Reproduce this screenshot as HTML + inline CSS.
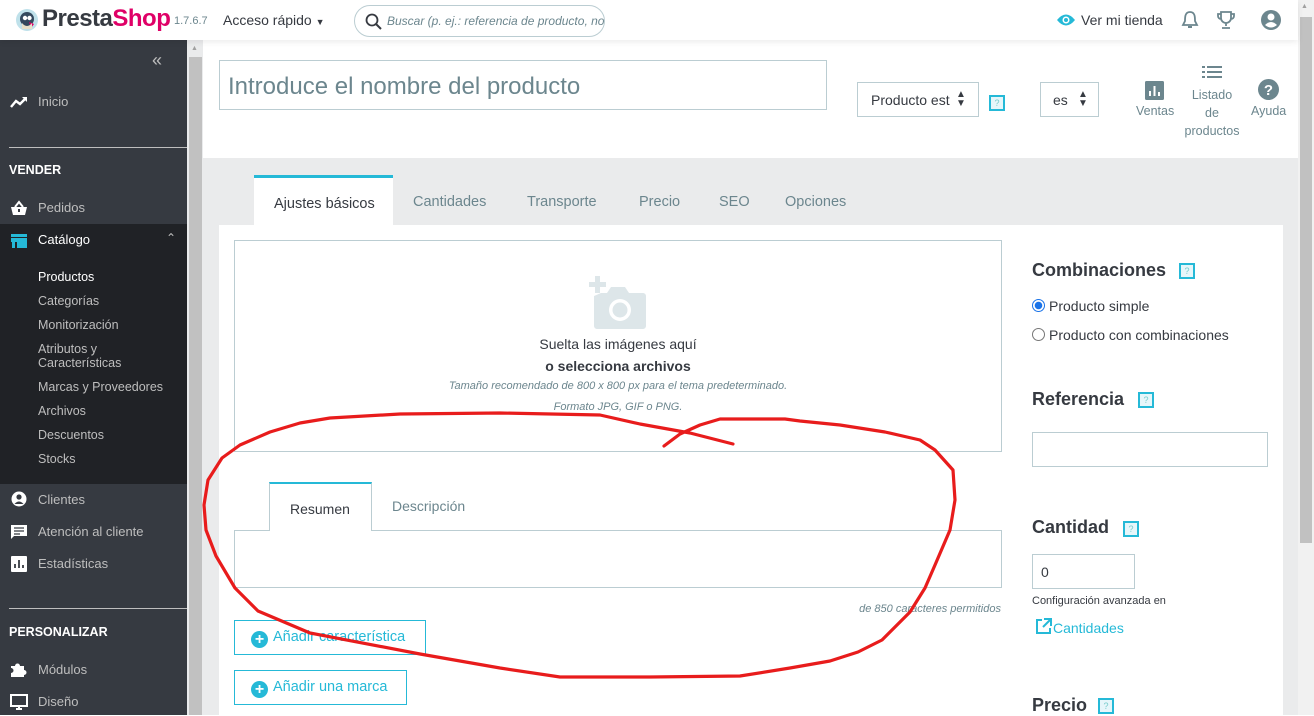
<!DOCTYPE html>
<html><head><meta charset="utf-8">
<style>
*{box-sizing:border-box;margin:0;padding:0}
body{width:1314px;height:715px;overflow:hidden;position:relative;font-family:"Liberation Sans","DejaVu Sans",sans-serif;background:#fff;color:#363a41}
.a{position:absolute;white-space:nowrap}
#hdr{position:absolute;left:0;top:0;width:1298px;height:40px;background:#fff;box-shadow:0 2px 6px rgba(0,0,0,.08);z-index:3}
#side{position:absolute;left:0;top:40px;width:187px;height:675px;background:#363a41}
.si{position:absolute;left:38px;font-size:13px;color:#bebebe}
.sub{position:absolute;left:38px;font-size:12.5px;color:#bebebe}
.ic{position:absolute;left:10px;width:18px;height:16px}
.q{position:absolute;width:16px;height:16px;border:2px solid #25b9d7;background:#e6f6fa;color:#7cc;font-size:9px;text-align:center;line-height:12px}
.tab{position:absolute;top:194px;font-size:14.5px;color:#6c868e}
.btn{position:absolute;left:234px;height:35px;border:1px solid #25b9d7;color:#25b9d7;font-size:14.5px;padding-left:16px;line-height:33px}
.btn span{display:inline-block;width:17px;height:17px;border-radius:50%;background:#25b9d7;color:#fff;font-size:16px;line-height:17px;text-align:center;font-weight:bold;vertical-align:-3px;margin-right:5px}
h3{position:absolute;left:1032px;font-size:18px;font-weight:bold;color:#363a41}
</style></head><body>
<div id="hdr">
 <svg class="a" style="left:15px;top:8px" width="24" height="24" viewBox="0 0 24 24"><circle cx="12" cy="12" r="11" fill="#bfe1ea"/><circle cx="12" cy="11" r="7" fill="#34495e"/><circle cx="10" cy="10" r="2.2" fill="#fff"/><circle cx="14.5" cy="10" r="2.2" fill="#fff"/><path d="M14 14 l5 2 -3 4z" fill="#df0067"/><path d="M7 15 q5 6 10 0 v6 h-10z" fill="#e8e0c8"/></svg>
 <div class="a" style="left:42px;top:5px;font-size:24px;font-weight:bold;letter-spacing:-0.5px"><span style="color:#363a41">Presta</span><span style="color:#df0067">Shop</span></div>
 <div class="a" style="left:174px;top:15px;font-size:11px;color:#6c868e">1.7.6.7</div>
 <div class="a" style="left:223px;top:12px;font-size:14px;color:#363a41">Acceso rápido <span style="font-size:9px">▼</span></div>
 <div class="a" style="left:354px;top:5px;width:251px;height:32px;border:1px solid #bbcdd2;border-radius:16px;overflow:hidden">
  <svg class="a" style="left:10px;top:7px" width="17" height="17" viewBox="0 0 17 17"><circle cx="7" cy="7" r="5.5" stroke="#363a41" stroke-width="1.8" fill="none"/><path d="M11 11l5 5" stroke="#363a41" stroke-width="2"/></svg>
  <div class="a" style="left:32px;top:8px;font-size:12px;font-style:italic;color:#6c868e">Buscar (p. ej.: referencia de producto, nom</div>
 </div>
 <svg class="a" style="left:1056px;top:12px" width="20" height="16" viewBox="0 0 20 16"><path d="M1 8 Q10 -3 19 8 Q10 19 1 8z" fill="#25b9d7"/><circle cx="10" cy="8" r="3.5" fill="#fff"/><circle cx="10" cy="8" r="2" fill="#25b9d7"/></svg>
 <div class="a" style="left:1081px;top:12px;font-size:14px;color:#363a41">Ver mi tienda</div>
 <svg class="a" style="left:1181px;top:10px" width="18" height="20" viewBox="0 0 18 20"><path d="M9 2 C4 2 4 7 4 11 L2 15 H16 L14 11 C14 7 14 2 9 2z" fill="none" stroke="#6c868e" stroke-width="1.8"/><path d="M7 17 h4" stroke="#6c868e" stroke-width="2"/></svg>
 <svg class="a" style="left:1216px;top:10px" width="20" height="20" viewBox="0 0 20 20"><path d="M5 2h10v6a5 5 0 0 1-10 0z M5 4H2v2a3 3 0 0 0 3 3 M15 4h3v2a3 3 0 0 1-3 3 M10 13v3 M6 18h8" fill="none" stroke="#6c868e" stroke-width="1.8"/></svg>
 <svg class="a" style="left:1260px;top:9px" width="22" height="22" viewBox="0 0 22 22"><circle cx="11" cy="11" r="10" fill="#6c868e"/><circle cx="11" cy="8" r="3.5" fill="#fff"/><path d="M5 16 q6-6 12 0 q-6 5 -12 0z" fill="#fff"/></svg>
</div>

<div id="side">
 <div class="a" style="left:152px;top:10px;font-size:18px;color:#bebebe">«</div>
 <svg class="ic" style="top:54px" viewBox="0 0 18 16"><path d="M1 13 L6 7 L10 10 L16 4" stroke="#fff" stroke-width="2.4" fill="none"/><path d="M12 3h5v5z" fill="#fff"/></svg>
 <div class="si" style="top:54px">Inicio</div>
 <div class="a" style="left:9px;top:107px;width:178px;height:1px;background:#bebebe"></div>
 <div class="a" style="left:9px;top:123px;font-size:12.5px;font-weight:bold;color:#fff">VENDER</div>
 <svg class="ic" style="top:160px" viewBox="0 0 18 16"><path d="M1 7h16l-2 8H3z" fill="#fff"/><path d="M5 7 L9 2 L13 7" stroke="#fff" stroke-width="2" fill="none"/><rect x="8" y="9" width="2" height="3" fill="#363a41"/></svg>
 <div class="si" style="top:160px">Pedidos</div>
 <div class="a" style="left:0;top:184px;width:187px;height:260px;background:#202226"></div>
 <svg class="ic" style="top:193px" viewBox="0 0 18 16"><rect x="1" y="1" width="16" height="3" fill="#25b9d7"/><rect x="1" y="5" width="16" height="4" fill="#25b9d7"/><rect x="2" y="9" width="3" height="6" fill="#25b9d7"/><rect x="7" y="9" width="10" height="6" fill="#25b9d7"/></svg>
 <div class="si" style="top:192px;color:#fff">Catálogo</div>
 <div class="a" style="left:166px;top:191px;font-size:12px;color:#bebebe">⌃</div>
 <div class="sub" style="top:230px;color:#fff">Productos</div>
 <div class="sub" style="top:254px">Categorías</div>
 <div class="sub" style="top:278px">Monitorización</div>
 <div class="sub" style="top:302px;line-height:14px;white-space:normal">Atributos y<br>Características</div>
 <div class="sub" style="top:340px">Marcas y Proveedores</div>
 <div class="sub" style="top:364px">Archivos</div>
 <div class="sub" style="top:388px">Descuentos</div>
 <div class="sub" style="top:412px">Stocks</div>
 <svg class="ic" style="top:451px" viewBox="0 0 18 16"><circle cx="9" cy="8" r="7.5" fill="#fff"/><circle cx="9" cy="6" r="2.6" fill="#363a41"/><path d="M4.5 13 q4.5-5 9 0z" fill="#363a41"/></svg>
 <div class="si" style="top:452px">Clientes</div>
 <svg class="ic" style="top:484px" viewBox="0 0 18 16"><path d="M1 1h16v11H4l-3 3z" fill="#fff"/><path d="M4 4h10M4 7h10M4 10h6" stroke="#363a41" stroke-width="1.3"/></svg>
 <div class="si" style="top:484px">Atención al cliente</div>
 <svg class="ic" style="top:516px" viewBox="0 0 18 16"><rect x="1" y="0" width="16" height="16" rx="1" fill="#fff"/><path d="M5 12V8M9 12V4M13 12V9" stroke="#363a41" stroke-width="1.8"/></svg>
 <div class="si" style="top:516px">Estadísticas</div>
 <div class="a" style="left:9px;top:568px;width:178px;height:1px;background:#bebebe"></div>
 <div class="a" style="left:9px;top:585px;font-size:12.5px;font-weight:bold;color:#fff">PERSONALIZAR</div>
 <svg class="ic" style="top:621px" viewBox="0 0 18 16"><path d="M1 5h4a2.5 2.5 0 1 1 5 0h4v4a2.5 2.5 0 1 1 0 5v2H1v-4a2.5 2.5 0 1 0 0-5z" fill="#fff"/></svg>
 <div class="si" style="top:622px">Módulos</div>
 <svg class="ic" style="top:654px" viewBox="0 0 18 16"><rect x="1" y="1" width="16" height="11" fill="none" stroke="#fff" stroke-width="2"/><path d="M6 15h6M9 12v3" stroke="#fff" stroke-width="2"/></svg>
 <div class="si" style="top:654px">Diseño</div>
</div>

<div class="a" style="left:187px;top:40px;width:16px;height:675px;background:#eaebec"></div>
<div class="a" style="left:189px;top:57px;width:13px;height:658px;background:#c1c1c1"></div>
<div class="a" style="left:191px;top:45px;font-size:7px;color:#a0a0a0">▲</div>

<div class="a" style="left:219px;top:60px;width:608px;height:50px;border:1px solid #bbcdd2;font-size:24px;color:#6c868e;padding:12px 0 0 8px">Introduce el nombre del producto</div>
<div class="a" style="left:857px;top:82px;width:122px;height:35px;border:1px solid #bbcdd2;font-size:14px;padding:9px 0 0 13px;overflow:hidden">Producto est<span class="a" style="left:98px;top:7px;font-size:10px;line-height:9px">▲<br>▼</span></div>
<div class="q" style="left:989px;top:95px">?</div>
<div class="a" style="left:1040px;top:82px;width:59px;height:35px;border:1px solid #bbcdd2;font-size:14px;padding:9px 0 0 12px">es<span class="a" style="left:37px;top:7px;font-size:10px;line-height:9px">▲<br>▼</span></div>
<svg class="a" style="left:1145px;top:81px" width="19" height="19" viewBox="0 0 19 19"><rect width="19" height="19" rx="1.5" fill="#6c868e"/><path d="M5 15V10M9.5 15V5M14 15V11" stroke="#fff" stroke-width="2"/></svg>
<div class="a" style="left:1136px;top:104px;font-size:12.5px;color:#6c868e">Ventas</div>
<svg class="a" style="left:1202px;top:65px" width="20" height="14" viewBox="0 0 20 14"><path d="M0 2h3M5 2h15M0 7h3M5 7h15M0 12h3M5 12h15" stroke="#6c868e" stroke-width="2"/></svg>
<div class="a" style="left:1180px;top:86px;width:64px;text-align:center;font-size:12.5px;line-height:18px;color:#6c868e;white-space:normal">Listado<br>de<br>productos</div>
<svg class="a" style="left:1258px;top:79px" width="21" height="21" viewBox="0 0 21 21"><circle cx="10.5" cy="10.5" r="10.5" fill="#6c868e"/><text x="10.5" y="16" text-anchor="middle" font-size="15" font-weight="bold" fill="#fff" font-family="Liberation Sans">?</text></svg>
<div class="a" style="left:1251px;top:104px;font-size:12.5px;color:#6c868e">Ayuda</div>

<div class="a" style="left:203px;top:158px;width:1095px;height:557px;background:#eaebec"></div>
<div class="a" style="left:254px;top:175px;width:139px;height:50px;background:#fff;border-top:3px solid #25b9d7"></div>
<div class="tab" style="left:274px;top:196px;color:#363a41">Ajustes básicos</div>
<div class="tab" style="left:413px">Cantidades</div>
<div class="tab" style="left:527px">Transporte</div>
<div class="tab" style="left:639px">Precio</div>
<div class="tab" style="left:719px">SEO</div>
<div class="tab" style="left:785px">Opciones</div>
<div class="a" style="left:219px;top:225px;width:1064px;height:490px;background:#fff"></div>

<div class="a" style="left:234px;top:240px;width:768px;height:212px;border:1px solid #bbcdd2"></div>
<svg class="a" style="left:587px;top:276px" width="60" height="54" viewBox="0 0 60 54"><path d="M8 0h5v6h6v5h-6v6H8v-6H2V6h6z" fill="#dde6e9"/><path d="M14 17 h6 l4 -6 h14 l4 6 h14 a3 3 0 0 1 3 3 v30 a3 3 0 0 1-3 3 H10 a3 3 0 0 1-3-3 V20z" fill="#dde6e9"/><circle cx="33" cy="34" r="11" fill="#fff"/><circle cx="33" cy="34" r="7.5" fill="#dde6e9"/></svg>
<div class="a" style="left:234px;top:336px;width:768px;text-align:center;font-size:14px;color:#363a41">Suelta las imágenes aquí</div>
<div class="a" style="left:234px;top:358px;width:768px;text-align:center;font-size:14px;font-weight:bold;color:#363a41">o selecciona archivos</div>
<div class="a" style="left:234px;top:380px;width:768px;text-align:center;font-size:11px;font-style:italic;color:#6c868e">Tamaño recomendado de 800 x 800 px para el tema predeterminado.</div>
<div class="a" style="left:234px;top:401px;width:768px;text-align:center;font-size:11px;font-style:italic;color:#6c868e">Formato JPG, GIF o PNG.</div>

<div class="a" style="left:234px;top:530px;width:768px;height:58px;border:1px solid #bbcdd2"></div>
<div class="a" style="left:269px;top:482px;width:103px;height:49px;background:#fff;border:1px solid #bbcdd2;border-bottom:none;border-top:2px solid #25b9d7"></div>
<div class="a" style="left:290px;top:501px;font-size:14px;color:#363a41">Resumen</div>
<div class="a" style="left:392px;top:498px;font-size:14px;color:#6c868e">Descripción</div>
<div class="a" style="left:700px;top:603px;width:301px;text-align:right;font-size:11px;font-style:italic;color:#6c868e">de 850 caracteres permitidos</div>
<div class="btn" style="top:620px;width:192px"><span>+</span>Añadir característica</div>
<div class="btn" style="top:670px;width:173px"><span>+</span>Añadir una marca</div>

<h3 style="top:260px">Combinaciones</h3><div class="q" style="left:1179px;top:263px">?</div>
<div class="a" style="left:1032px;top:299px;width:13px;height:13px;border-radius:50%;border:1px solid #1a73e8;background:radial-gradient(circle,#1a73e8 3.5px,#fff 4px)"></div>
<div class="a" style="left:1049px;top:298px;font-size:14px;color:#363a41">Producto simple</div>
<div class="a" style="left:1032px;top:328px;width:13px;height:13px;border-radius:50%;border:1px solid #777"></div>
<div class="a" style="left:1049px;top:327px;font-size:14px;color:#363a41">Producto con combinaciones</div>
<h3 style="top:389px">Referencia</h3><div class="q" style="left:1138px;top:392px">?</div>
<div class="a" style="left:1032px;top:432px;width:236px;height:35px;border:1px solid #bbcdd2"></div>
<h3 style="top:517px">Cantidad</h3><div class="q" style="left:1123px;top:521px">?</div>
<div class="a" style="left:1032px;top:554px;width:103px;height:35px;border:1px solid #bbcdd2;font-size:14px;padding:9px 0 0 8px">0</div>
<div class="a" style="left:1032px;top:595px;font-size:11px;color:#363a41">Configuración avanzada en</div>
<svg class="a" style="left:1035px;top:618px" width="17" height="17" viewBox="0 0 17 17"><path d="M7 2H2v13h13v-5" fill="none" stroke="#25b9d7" stroke-width="2"/><path d="M9 1h7v7M16 1L8 9" fill="none" stroke="#25b9d7" stroke-width="2"/></svg>
<div class="a" style="left:1053px;top:620px;font-size:14px;color:#25b9d7">Cantidades</div>
<h3 style="top:695px">Precio</h3><div class="q" style="left:1098px;top:698px">?</div>

<div class="a" style="left:1298px;top:0;width:16px;height:715px;background:#f1f1f1"></div>
<div class="a" style="left:1300px;top:17px;width:12px;height:526px;background:#c1c1c1"></div>
<div class="a" style="left:1301px;top:3px;font-size:7px;color:#a0a0a0">▲</div>

<svg class="a" style="left:0;top:0;z-index:5" width="1314" height="715" viewBox="0 0 1314 715">
<path d="M733 444 L690 433 L640 424 L600 415 L500 413 L400 414 L330 418 L300 423 L270 432 L240 445 L222 458 L208 480 L204 505 L206 530 L216 556 L235 588 L258 611 L310 633 L420 654 L500 668 L560 677 L650 677 L740 676 L790 668 L830 661 L858 652 L882 640 L910 612 L925 588 L935 565 L950 530 L955 500 L953 470 L935 450 L920 440 L885 432 L840 425 L800 421 L785 419 L720 419 L700 425 L680 434 L664 446" fill="none" stroke="#e81c1c" stroke-width="3.2" stroke-linecap="round" stroke-linejoin="round"/>
</svg>
</body></html>
